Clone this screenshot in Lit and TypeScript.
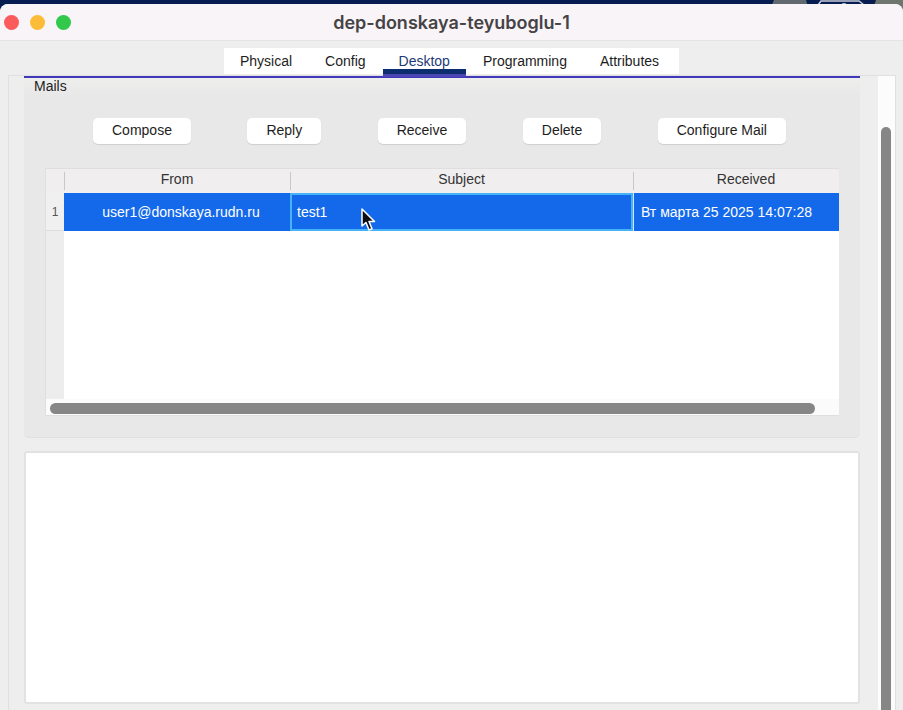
import { LitElement, html, css } from "lit";
import { customElement, state } from "lit/decorators.js";
import { classMap } from "lit/directives/class-map.js";

interface Mail {
  from: string;
  subject: string;
  received: string;
}

@customElement("mail-table")
class MailTable extends LitElement {
  @state() mails: Mail[] = [
    {
      from: "user1@donskaya.rudn.ru",
      subject: "test1",
      received: "Вт марта 25 2025 14:07:28",
    },
  ];

  static styles = css`
    :host {
      display: flex;
      flex-direction: column;
      height: 248px;
      box-sizing: border-box;
      border: 1px solid #dfdfdf;
      border-right: 0;
      background: linear-gradient(to right, #ededed 18px, #fff 18px);
    }
    .table {
      width: 100%;
      table-layout: fixed;
      border-collapse: separate;
      border-spacing: 0;
    }
    .index { width: 18px; }
    .from { width: 226px; }
    .received { width: 206px; }
    th, td {
      box-sizing: border-box;
      padding: 0;
      font-weight: 400;
      line-height: 16px;
    }
    thead th {
      height: 24px;
      padding-bottom: 4px;
      background: #f0eeee;
      color: #333;
    }
    thead th + th {
      background: linear-gradient(#c8c8c8, #c8c8c8) 0 3px / 1px 18px no-repeat #f0eeee;
    }
    thead th:last-child { padding-left: 20px; }
    tbody th {
      height: 38px;
      border-bottom: 1px solid #dcdcdc;
      background: #f0f0f0;
      color: #555;
      font-size: 12px;
    }
    tbody td {
      height: 38px;
      padding: 0 7px;
      background: #1469eb;
      color: #fff;
      white-space: nowrap;
      overflow: hidden;
    }
    tbody .sender { padding: 0 0 0 8px; text-align: center; }
    tbody .current {
      border: 2px solid #45b3f5;
      padding: 0 5px;
    }
    tbody .date { border-left: 1px solid #d5e6ff; }
    .scroll {
      margin-top: auto;
      height: 16px;
      padding: 4px 24px 1px 4px;
      box-sizing: border-box;
      background: #fbfbfb;
    }
    .thumb {
      height: 11px;
      border-radius: 6px;
      background: #868686;
    }
  `;

  render() {
    return html`
      <table class="table">
        <colgroup>
          <col class="index" />
          <col class="from" />
          <col />
          <col class="received" />
        </colgroup>
        <thead>
          <tr>
            <th></th>
            <th scope="col">From</th>
            <th scope="col">Subject</th>
            <th scope="col">Received</th>
          </tr>
        </thead>
        <tbody>
          ${this.mails.map(
            (mail, i) => html`<tr>
              <th scope="row">${i + 1}</th>
              <td class="sender">${mail.from}</td>
              <td class="current">${mail.subject}</td>
              <td class="date">${mail.received}</td>
            </tr>`
          )}
        </tbody>
      </table>
      <div class="scroll"><div class="thumb"></div></div>
    `;
  }
}

@customElement("app-root")
class AppRoot extends LitElement {
  @state() tab = "Desktop";

  private tabs = ["Physical", "Config", "Desktop", "Programming", "Attributes"];
  private actions = ["Compose", "Reply", "Receive", "Delete", "Configure Mail"];

  static styles = css`
    :host {
      display: flex;
      flex-direction: column;
      min-height: 100vh;
      position: relative;
      overflow: hidden;
      background: #071d52;
      color: #1d1d1d;
      font: 14px/16px "Liberation Sans", Arial, sans-serif;
    }
    button, textarea {
      font: inherit;
      color: inherit;
      border: 0;
      margin: 0;
      padding: 0;
    }
    .backdrop {
      position: absolute;
      top: 0;
      right: 0;
    }
    .window {
      position: relative;
      display: flex;
      flex-direction: column;
      flex: 1;
      margin-top: 4px;
      border-radius: 8px 8px 0 0;
      overflow: hidden;
      background: #eee;
    }
    .titlebar {
      display: grid;
      grid-template-columns: 1fr auto 1fr;
      align-items: center;
      height: 37px;
      box-sizing: border-box;
      padding: 1px 4px 0;
      border-bottom: 1px solid #e6e3e5;
      background: #f8f4f7;
    }
    .lights { display: flex; gap: 11px; }
    .light { width: 15px; height: 15px; border-radius: 50%; }
    .close { background: #fc5b5b; }
    .minimise { background: #fdbc38; }
    .zoom { background: #31c84b; }
    .title {
      margin: 0;
      font: 600 18px/24px Inter, sans-serif;
      color: #454345;
    }
    .tabs {
      position: relative;
      z-index: 1;
      display: flex;
      gap: 1px;
      align-self: center;
      margin: 7px 0 2px;
      height: 26px;
      padding-right: 4px;
      background: #fff;
    }
    .tab {
      height: 26px;
      padding: 0 16px;
      background: none;
    }
    .tab.active {
      padding-top: 5px;
      border-bottom: 5px solid #0c2d6e;
      box-shadow: 0 3px #4b46b4;
      color: #1d3a78;
    }
    .pane {
      display: flex;
      flex: 1;
      margin: -1px 7px 0 8px;
      border: 1px solid #e0e0e0;
      border-bottom: 0;
    }
    .content {
      flex: 1;
      min-width: 0;
      padding: 0 18px 6px 15px;
    }
    .mails {
      padding: 0 21px 21px;
      border-top: 2px solid #4139ba;
      border-bottom: 1px solid #e0e0e0;
      border-radius: 0 0 5px 5px;
      background: linear-gradient(#eeeeed, #e8e8e8 18px);
    }
    .legend {
      margin: 0 0 0 -11px;
      font: inherit;
    }
    .actions {
      display: flex;
      justify-content: space-between;
      margin: 24px 53px 24px 48px;
    }
    .action {
      height: 26px;
      padding: 0 19px 2px;
      border-radius: 5px;
      background: #fff;
      box-shadow: 0 1px 1px #cfcfcf;
    }
    .message {
      display: block;
      width: 100%;
      height: 253px;
      box-sizing: border-box;
      margin-top: 13px;
      border: 2px solid #e2e2e2;
      border-radius: 3px;
      background: #fff;
      resize: none;
      outline: 0;
    }
    .scroll {
      width: 17px;
      box-sizing: border-box;
      padding: 51px 4px 0 3px;
      background: #fcfcfc;
      display: flex;
    }
    .thumb {
      flex: 1;
      border-radius: 5px 5px 0 0;
      background: #868686;
    }
    .cursor {
      position: absolute;
      left: 360px;
      top: 207px;
      pointer-events: none;
    }
  `;

  render() {
    return html`
      <svg class="backdrop" width="140" height="14" viewBox="0 0 140 14" aria-hidden="true">
        <path d="M5 14 11 0H43L47 14Z" fill="#626970" />
        <path d="M108 14 113 0H140V14Z" fill="#6f756f" />
        <path d="M55 5 58 1H96L101 5" fill="none" stroke="#c7cbd9" stroke-width="1.5" />
        <circle cx="81" cy="6" r="3" fill="#c7cbd9" />
      </svg>
      <main class="window">
        <header class="titlebar">
          <div class="lights">
            <button class="light close" aria-label="Close"></button>
            <button class="light minimise" aria-label="Minimise"></button>
            <button class="light zoom" aria-label="Zoom"></button>
          </div>
          <h1 class="title">dep-donskaya-teyuboglu-1</h1>
        </header>
        <nav class="tabs" role="tablist">
          ${this.tabs.map(
            (name) => html`<button
              role="tab"
              aria-selected=${name === this.tab}
              class=${classMap({ tab: true, active: name === this.tab })}
              @click=${() => (this.tab = name)}
            >${name}</button>`
          )}
        </nav>
        <div class="pane">
          <div class="content">
            <section class="mails" aria-labelledby="mails">
              <h2 class="legend" id="mails">Mails</h2>
              <div class="actions">
                ${this.actions.map((name) => html`<button class="action">${name}</button>`)}
              </div>
              <mail-table></mail-table>
            </section>
            <textarea class="message" aria-label="Message" readonly></textarea>
          </div>
          <div class="scroll"><div class="thumb"></div></div>
        </div>
      </main>
      <svg class="cursor" width="18" height="26" viewBox="0 0 18 26" aria-hidden="true">
        <path d="M2 2V19L6 15.500 9 23 12 21.700 9 14.500H14.500Z" fill="#0c0c14" stroke="#fff" stroke-width="1.500" stroke-linejoin="round" />
      </svg>
    `;
  }
}
